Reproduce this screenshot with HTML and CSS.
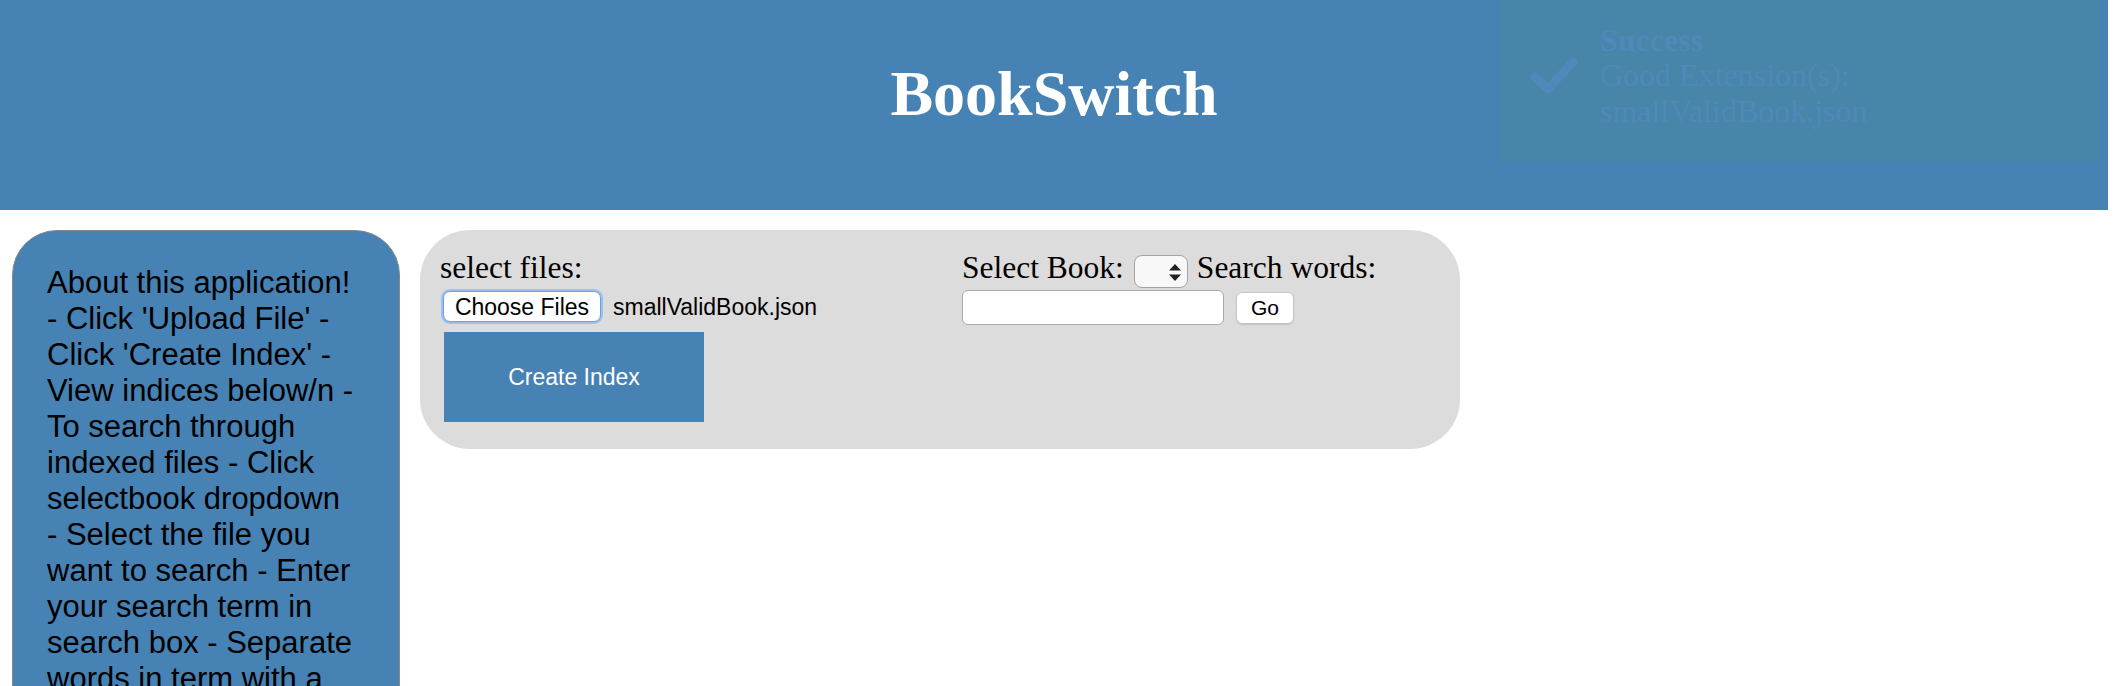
FILE: index.html
```html
<!DOCTYPE html>
<html lang="en">
<head>
<meta charset="utf-8">
<title>BookSwitch</title>
<link rel="stylesheet" href="styles.css">
</head>
<body>
<header class="topbar">
  <h1 class="title">BookSwitch</h1>
  <div class="toast">
    <svg class="toast-icon" width="48" height="40" viewBox="0 0 48 40" aria-hidden="true">
      <polyline points="5,21 18,33 43,6" fill="none" stroke="currentColor" stroke-width="9" stroke-linecap="round" stroke-linejoin="round"/>
    </svg>
    <div class="toast-text">
      <div class="toast-title">Success</div>
      <div>Good Extension(s):</div>
      <div>smallValidBook.json</div>
    </div>
  </div>
</header>
<main class="layout">
  <aside class="about">
    About this application! - Click 'Upload File' - Click 'Create Index' - View indices below/n - To search through indexed files - Click selectbook dropdown - Select the file you want to search - Enter your search term in search box - Separate words in term with a space
  </aside>
  <section class="panel">
    <div class="col-upload">
      <div class="label">select files:</div>
      <div class="file-row">
        <button class="choose-btn" type="button">Choose Files</button>
        <span class="file-name">smallValidBook.json</span>
      </div>
      <button class="create-btn" type="button">Create Index</button>
    </div>
    <div class="col-search">
      <div class="search-line">
        <span class="label">Select Book:</span>
        <span class="select-wrap">
          <select class="book-select"></select>
          <svg class="select-arrows" width="12" height="17" viewBox="0 0 12 17" aria-hidden="true">
            <polygon points="6,0 12,6.5 0,6.5" fill="#222"/>
            <polygon points="0,10.5 12,10.5 6,17" fill="#222"/>
          </svg>
        </span>
        <span class="label">Search words:</span>
      </div>
      <div class="query-row">
        <input class="query" type="text">
        <button class="go-btn" type="button">Go</button>
      </div>
    </div>
  </section>
</main>
</body>
</html>
```

FILE: styles.css
```css
html, body {
  margin: 0;
  padding: 0;
  background: #ffffff;
}

body {
  font-family: "Liberation Serif", "Times New Roman", serif;
  color: #000;
  overflow: hidden;
}

.topbar {
  position: relative;
  width: calc(100% - 16px);
  height: 210px;
  background: #4682b4;
  box-sizing: border-box;
  padding-top: 57px;
}

.title {
  margin: 0;
  text-align: center;
  color: #ffffff;
  font-family: "Liberation Serif", "Times New Roman", serif;
  font-weight: bold;
  font-size: 64px;
  line-height: 74px;
}

.toast {
  position: absolute;
  top: 0;
  right: 8px;
  width: 600px;
  height: 162px;
  box-sizing: border-box;
  background: #4785a9;
  color: #5088ba;
  display: flex;
  align-items: center;
  padding: 0 0 10px 30px;
  gap: 22px;
}

.toast-icon {
  display: block;
  flex: none;
}

.toast-text {
  font-family: "Liberation Serif", "Times New Roman", serif;
  font-size: 32px;
  line-height: 35.5px;
}

.toast-title {
  font-weight: bold;
}

.layout {
  display: flex;
  align-items: flex-start;
  gap: 20px;
  padding: 20px 0 0 12px;
}

.about {
  flex: none;
  width: 310px;
  padding: 34px 42px 40px 34px;
  background: #4682b4;
  border: 1px solid #888888;
  border-radius: 45px;
  font-family: "Liberation Sans", Helvetica, Arial, sans-serif;
  font-size: 31px;
  line-height: 36px;
  color: #000;
}

.panel {
  flex: none;
  width: 1040px;
  height: 219px;
  box-sizing: border-box;
  background: #dcdcdc;
  border-radius: 50px;
  padding: 20px 20px 0 20px;
  display: grid;
  grid-template-columns: 522px 1fr;
  align-items: start;
}

.label {
  font-family: "Liberation Serif", "Times New Roman", serif;
  font-size: 31.5px;
  line-height: 36px;
}

.file-row {
  display: flex;
  align-items: center;
  margin-top: 5px;
  padding-left: 3px;
}

.choose-btn {
  width: 158px;
  height: 31px;
  box-sizing: border-box;
  margin: 0;
  padding: 0;
  background: #ffffff;
  border: 1px solid #6d9fdf;
  border-radius: 7px;
  box-shadow: 0 0 0 2px #9dc0ec;
  font-family: "Liberation Sans", Helvetica, Arial, sans-serif;
  font-size: 23px;
  line-height: 28px;
  color: #000;
}

.file-name {
  margin-left: 12px;
  font-family: "Liberation Sans", Helvetica, Arial, sans-serif;
  font-size: 23px;
  line-height: 28px;
}

.create-btn {
  display: block;
  width: 260px;
  height: 90px;
  margin: 10px 0 0 4px;
  padding: 0;
  border: none;
  background: #4682b4;
  color: #ffffff;
  font-family: "Liberation Sans", Helvetica, Arial, sans-serif;
  font-size: 23px;
}

.search-line {
  display: flex;
  align-items: flex-start;
}

.select-wrap {
  position: relative;
  display: block;
  margin: 5px 9px 0 10px;
}

.book-select {
  display: block;
  width: 54px;
  height: 33px;
  box-sizing: border-box;
  margin: 0;
  -webkit-appearance: none;
  appearance: none;
  background: #f8f8f8;
  border: 1px solid #a3a3a3;
  border-radius: 8px;
}

.select-arrows {
  position: absolute;
  left: 35px;
  top: 9px;
  pointer-events: none;
}

.query-row {
  display: flex;
  align-items: center;
  gap: 12px;
  margin-top: 2px;
}

.query {
  width: 262px;
  height: 35px;
  box-sizing: border-box;
  margin: 0;
  background: #ffffff;
  border: 1px solid #aaaaaa;
  border-radius: 6px;
}

.go-btn {
  width: 58px;
  height: 32px;
  box-sizing: border-box;
  margin: 0;
  padding: 0;
  background: #ffffff;
  border: 1px solid #c6c6c6;
  border-radius: 6px;
  box-shadow: 0 1px 1px rgba(0, 0, 0, 0.12);
  font-family: "Liberation Sans", Helvetica, Arial, sans-serif;
  font-size: 21px;
  color: #000;
}
```
